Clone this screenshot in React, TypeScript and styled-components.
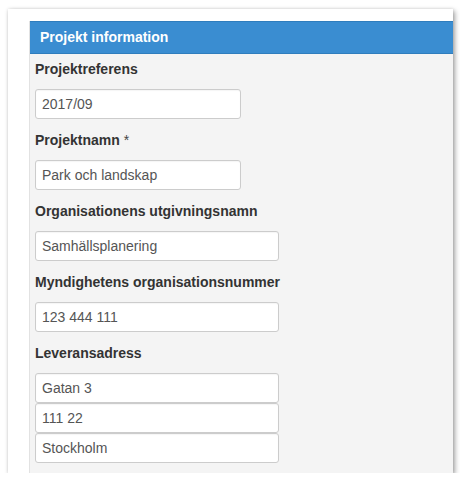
import React from "react";
import styled, { createGlobalStyle } from "styled-components";

const Global = createGlobalStyle`
  html, body { margin: 0; padding: 0; background: #ffffff; overflow: hidden; }
  body { font-family: "Liberation Sans", Arial, sans-serif; }
`;

const Page = styled.div`
  padding: 9px 0 0 8px;
`;

const Card = styled.div`
  width: 445px;
  height: 464px;
  background: #ffffff;
  box-shadow: 2px 2px 5px rgba(0, 0, 0, 0.35), 0 0 3px rgba(0, 0, 0, 0.12);
  padding: 12px 0 0 21px;
  box-sizing: border-box;
  overflow: hidden;
`;

const Panel = styled.section`
  background: #f4f4f4;
  border-left: 1px solid #e2e2e2;
  height: 100%;
  box-sizing: border-box;
`;

const Header = styled.h2`
  margin: 0;
  height: 33px;
  box-sizing: border-box;
  background: #3a8dd1;
  border-top: 1px solid #2f7dbd;
  border-bottom: 1px solid #2f7dbd;
  color: #ffffff;
  font-size: 14px;
  font-weight: bold;
  line-height: 31px;
  padding-left: 10px;
`;

const Body = styled.div`
  padding: 5px 6px 10px 5px;
`;

const Group = styled.div`
  display: flex;
  flex-direction: column;
  margin-bottom: 11px;
`;

const Label = styled.label`
  display: block;
  color: #333333;
  font-size: 14px;
  font-weight: bold;
  line-height: 20px;
  margin-bottom: 10px;
`;

const Required = styled.span`
  font-weight: normal;
  color: #444444;
`;

const Input = styled.input<{ $w: number }>`
  width: ${(p) => p.$w}px;
  height: 30px;
  box-sizing: border-box;
  border: 1px solid #cccccc;
  border-radius: 3px;
  background: #ffffff;
  color: #555555;
  font-family: "Liberation Sans", Arial, sans-serif;
  font-size: 14px;
  padding: 0 6px;
  margin: 0;
  outline: none;
  box-shadow: inset 0 1px 1px rgba(0, 0, 0, 0.04);
`;

const Stack = styled.div`
  display: flex;
  flex-direction: column;
`;

export default function App() {
  return (
    <>
      <Global />
      <Page>
        <Card>
          <Panel>
            <Header>Projekt information</Header>
            <Body>
              <Group>
                <Label>Projektreferens</Label>
                <Input $w={206} defaultValue="2017/09" />
              </Group>
              <Group>
                <Label>
                  Projektnamn <Required>*</Required>
                </Label>
                <Input $w={206} defaultValue="Park och landskap" />
              </Group>
              <Group>
                <Label>Organisationens utgivningsnamn</Label>
                <Input $w={244} defaultValue="Samhällsplanering" />
              </Group>
              <Group>
                <Label>Myndighetens organisationsnummer</Label>
                <Input $w={244} defaultValue="123 444 111" />
              </Group>
              <Group>
                <Label>Leveransadress</Label>
                <Stack>
                  <Input $w={244} defaultValue="Gatan 3" />
                  <Input $w={244} defaultValue="111 22" />
                  <Input $w={244} defaultValue="Stockholm" />
                </Stack>
              </Group>
            </Body>
          </Panel>
        </Card>
      </Page>
    </>
  );
}
